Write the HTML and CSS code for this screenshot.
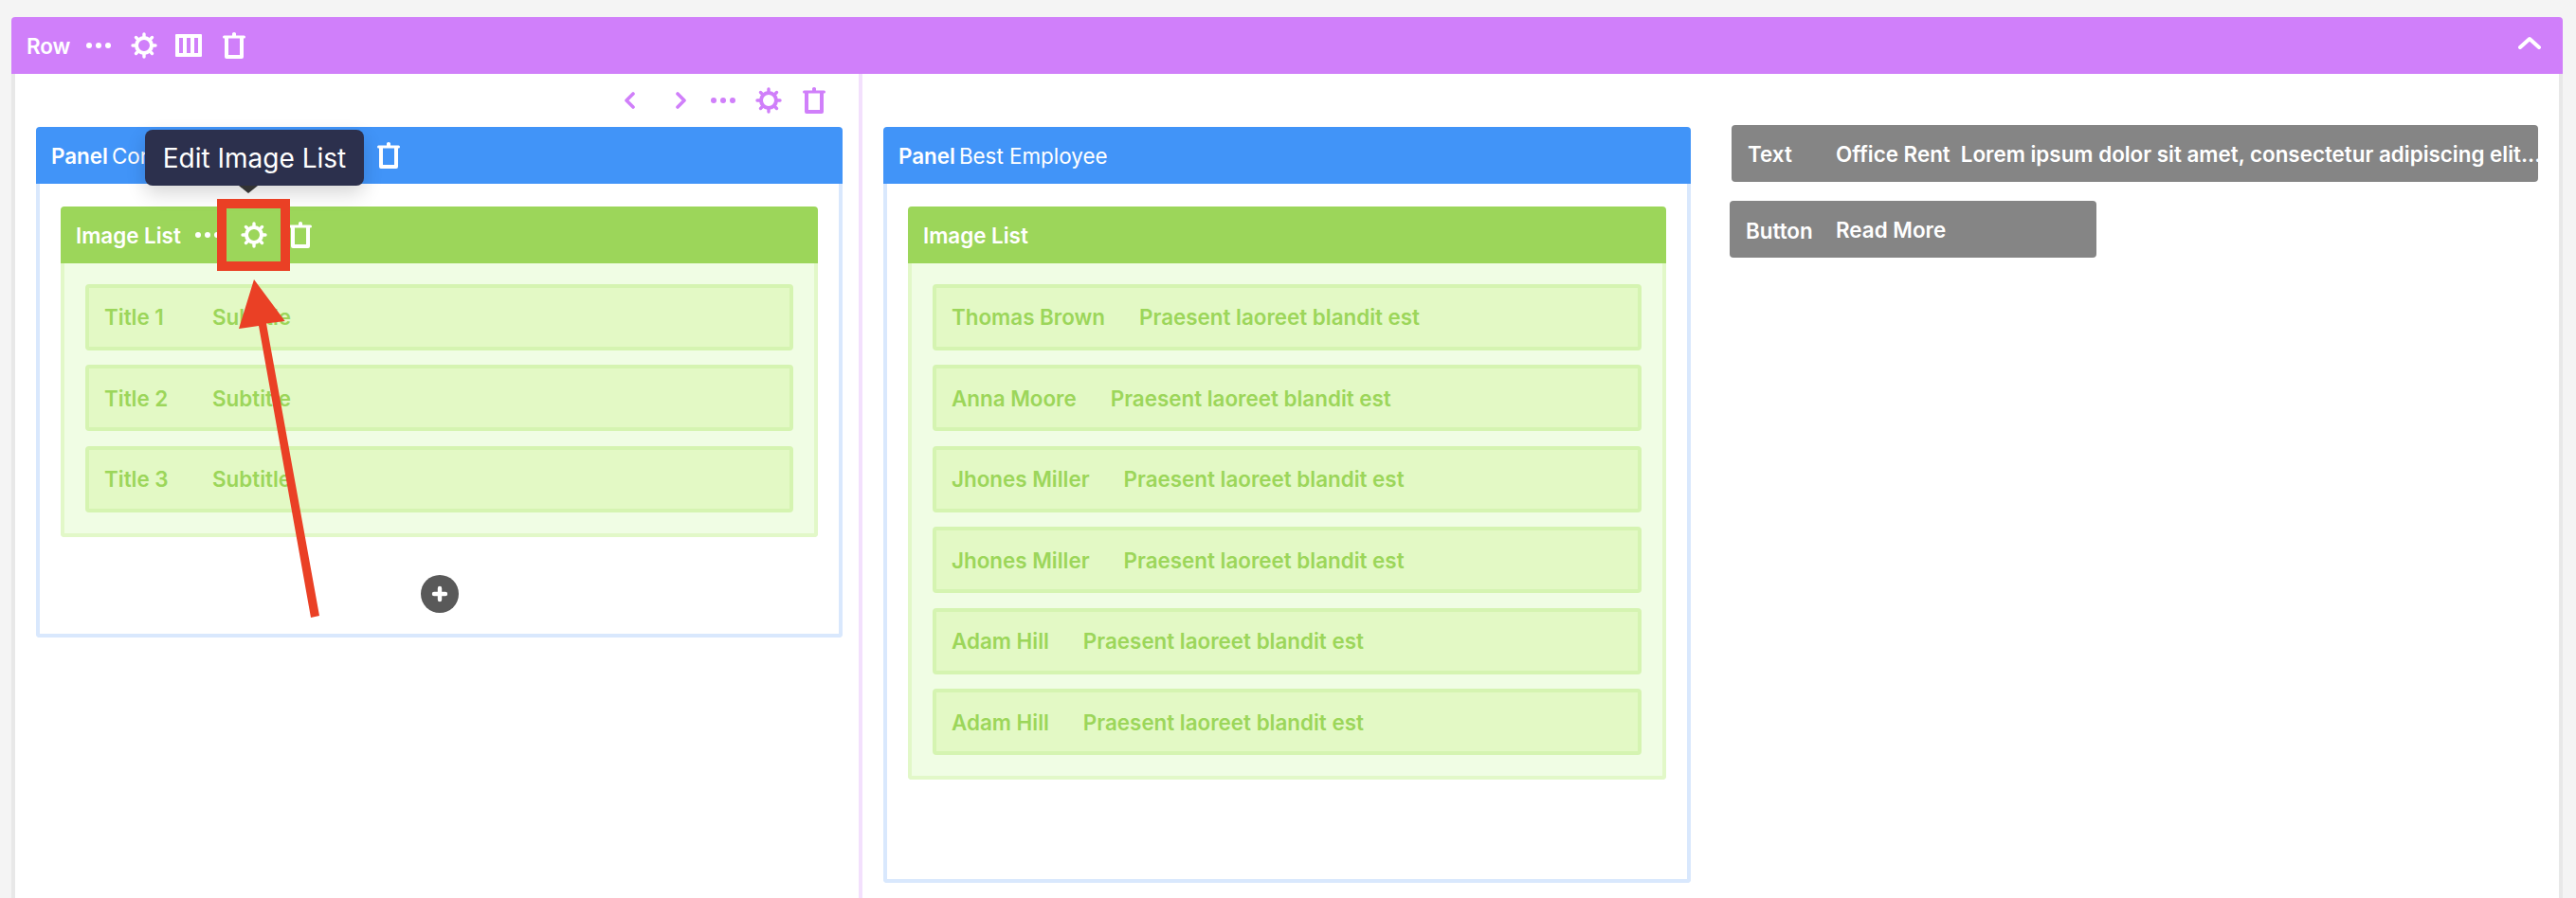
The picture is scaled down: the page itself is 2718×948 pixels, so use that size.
FILE: index.html
```html
<!DOCTYPE html>
<html>
<head>
  <title>Page Builder</title>
  <link rel="stylesheet" href="styles.css">
</head>
<body>
  <svg class="icon-defs" width="0" height="0">
    <defs>
      <symbol id="i-dots" viewBox="0 0 26 6">
        <circle cx="3" cy="3" r="3"/><circle cx="13" cy="3" r="3"/><circle cx="23" cy="3" r="3"/>
      </symbol>
      <symbol id="i-gear" viewBox="0 0 28 28">
        <circle cx="14" cy="14" r="8" fill="none" stroke="currentColor" stroke-width="4"/>
        <g stroke="currentColor" stroke-width="3.4" stroke-linecap="round">
          <path d="M14 2v3M14 23v3M2 14h3M23 14h3M5.5 5.5l2.2 2.2M20.3 20.3l2.2 2.2M5.5 22.5l2.2-2.2M20.3 7.700l2.200-2.200"/>
        </g>
      </symbol>
      <symbol id="i-columns" viewBox="0 0 28 24">
        <path fill-rule="evenodd" d="M1 0h26a1 1 0 0 1 1 1v22a1 1 0 0 1-1 1H1a1 1 0 0 1-1-1V1a1 1 0 0 1 1-1zM4 4v16h4V4zM12 4v16h4V4zM20 4v16h4V4z"/>
      </symbol>
      <symbol id="i-trash" viewBox="0 0 24 28">
        <g fill="none" stroke="currentColor" stroke-width="4" stroke-linejoin="round">
          <path d="M4 6v20h16V6"/>
        </g>
        <path d="M1.500 3.500h21a1.500 1.500 0 0 1 0 3h-21a1.500 1.500 0 0 1 0-3zM10 3.500V1.500a2 1.500 0 0 1 4 0v2z"/>
      </symbol>
      <symbol id="i-left" viewBox="0 0 12 18">
        <path d="M10 2L3 9l7 7" fill="none" stroke="currentColor" stroke-width="3.600" stroke-linecap="round" stroke-linejoin="round"/>
      </symbol>
      <symbol id="i-right" viewBox="0 0 12 18">
        <path d="M2 2l7 7-7 7" fill="none" stroke="currentColor" stroke-width="3.600" stroke-linecap="round" stroke-linejoin="round"/>
      </symbol>
      <symbol id="i-up" viewBox="0 0 24 14">
        <path d="M2 12l10-9 10 9" fill="none" stroke="currentColor" stroke-width="4" stroke-linecap="round" stroke-linejoin="round"/>
      </symbol>
    </defs>
  </svg>

  <div class="page">
    <div class="row-block">
      <div class="bar bar-row">
        <span class="bar-title">Row</span>
        <svg class="ico ico-dots"><use href="#i-dots"/></svg>
        <svg class="ico ico-gear"><use href="#i-gear"/></svg>
        <svg class="ico ico-columns"><use href="#i-columns"/></svg>
        <svg class="ico ico-trash"><use href="#i-trash"/></svg>
        <svg class="ico ico-up"><use href="#i-up"/></svg>
      </div>

      <div class="row-body">
        <div class="col col-left">
          <div class="col-tools">
            <svg class="ico ico-chev"><use href="#i-left"/></svg>
            <svg class="ico ico-chev next"><use href="#i-right"/></svg>
            <svg class="ico ico-dots"><use href="#i-dots"/></svg>
            <svg class="ico ico-gear"><use href="#i-gear"/></svg>
            <svg class="ico ico-trash"><use href="#i-trash"/></svg>
          </div>

          <div class="panel">
            <div class="bar bar-panel">
              <span class="bar-title">Panel</span>
              <span class="panel-name">Content</span>
              <svg class="ico ico-trash panel-trash"><use href="#i-trash"/></svg>
            </div>
            <div class="panel-body">
              <div class="image-list">
                <div class="bar bar-list">
                  <span class="bar-title">Image List</span>
                  <svg class="ico ico-dots"><use href="#i-dots"/></svg>
                  <svg class="ico ico-gear"><use href="#i-gear"/></svg>
                  <svg class="ico ico-trash"><use href="#i-trash"/></svg>
                </div>
                <div class="list-body">
                  <div class="list-item"><span class="item-title">Title 1</span><span>Subtitle</span></div>
                  <div class="list-item"><span class="item-title">Title 2</span><span>Subtitle</span></div>
                  <div class="list-item"><span class="item-title">Title 3</span><span>Subtitle</span></div>
                </div>
              </div>
              <div class="add-wrap">
                <div class="add-btn">
                  <svg width="18" height="18" viewBox="0 0 18 18"><path d="M9 3v12M3 9h12" stroke="#fff" stroke-width="4.400" stroke-linecap="round"/></svg>
                </div>
              </div>
            </div>
          </div>
        </div>

        <div class="col col-mid">
          <div class="panel">
            <div class="bar bar-panel">
              <span class="bar-title">Panel</span>
              <span class="panel-name">Best Employee</span>
            </div>
            <div class="panel-body tall">
              <div class="image-list">
                <div class="bar bar-list">
                  <span class="bar-title">Image List</span>
                </div>
                <div class="list-body">
                  <div class="list-item"><span class="item-title">Thomas Brown</span><span>Praesent laoreet blandit est</span></div>
                  <div class="list-item"><span class="item-title">Anna Moore</span><span>Praesent laoreet blandit est</span></div>
                  <div class="list-item"><span class="item-title">Jhones Miller</span><span>Praesent laoreet blandit est</span></div>
                  <div class="list-item"><span class="item-title">Jhones Miller</span><span>Praesent laoreet blandit est</span></div>
                  <div class="list-item"><span class="item-title">Adam Hill</span><span>Praesent laoreet blandit est</span></div>
                  <div class="list-item"><span class="item-title">Adam Hill</span><span>Praesent laoreet blandit est</span></div>
                </div>
              </div>
            </div>
          </div>
        </div>

        <div class="col col-side">
          <div class="grey-bar grey-text">
            <span class="grey-label">Text</span>
            <span class="grey-head">Office Rent</span>
            <span>Lorem ipsum dolor sit amet, consectetur adipiscing elit...</span>
          </div>
          <div class="grey-bar grey-button">
            <span class="grey-label">Button</span>
            <span>Read More</span>
          </div>
        </div>
      </div>
    </div>
  </div>

  <!-- annotation drawn over the page -->
  <div class="tooltip">Edit Image List</div>
  <div class="red-box"></div>
  <svg class="red-arrow" width="110" height="370" viewBox="240 290 110 370">
    <polygon points="268,295 300.700,339 281,341.500 337,650 328,652 273,344 252,347" fill="#ea4025"/>
  </svg>
</body>
</html>
```

FILE: styles.css
```css
* {
  box-sizing: border-box;
}

html, body {
  margin: 0;
  height: 948px;
  overflow: hidden;
  background: #f4f4f4;
}

body {
  position: relative;
  font-family: Inter, "Noto Sans", sans-serif;
  font-size: 22.4px;
  font-weight: 600;
  color: #fff;
}

.icon-defs {
  position: absolute;
}

.page {
  padding: 18px 14px 0 12px;
}

.ico {
  display: block;
  flex: none;
  fill: currentColor;
  color: inherit;
}

.ico-dots { width: 26px; height: 6px; }
.ico-gear { width: 28px; height: 28px; }
.ico-columns { width: 28px; height: 24px; }
.ico-trash { width: 24px; height: 28px; }
.ico-chev { width: 12px; height: 18px; }
.ico-up { width: 24px; height: 14px; }

.bar {
  display: flex;
  align-items: center;
  height: 60px;
  border-radius: 4px 4px 0 0;
}

.bar-title {
  white-space: nowrap;
}

/* row */
.bar-row {
  background: #d07ffa;
  padding: 0 23px 0 16px;
}

.bar-row .ico-dots { margin-left: 17px; }
.bar-row .ico-gear { margin-left: 21px; }
.bar-row .ico-columns { margin-left: 19px; }
.bar-row .ico-trash { margin-left: 22px; }
.bar-row .ico-up { margin-left: auto; margin-top: -6px; }

.row-body {
  display: flex;
  height: 870px;
  background: #fff;
  border-left: 4px solid #e8e8e8;
  border-right: 4px solid #e8e8e8;
}

.col-left {
  flex: none;
  width: 894px;
  padding: 0 17px 0 22px;
  border-right: 4px solid #f3e0fd;
}

.col-tools {
  display: flex;
  align-items: center;
  justify-content: flex-end;
  height: 56px;
  padding: 0 18px 0 0;
  color: #d07ffa;
}

.col-tools .next { margin-left: 43px; }
.col-tools .ico-dots { margin-left: 25px; }
.col-tools .ico-gear { margin-left: 21px; }
.col-tools .ico-trash { margin-left: 22px; }

.col-mid {
  flex: none;
  width: 874px;
  padding: 56px 0 0 22px;
}

.col-side {
  flex: 1;
  display: flex;
  flex-direction: column;
  align-items: flex-start;
  gap: 20px;
  padding: 54px 0 0 41px;
}

/* panel */
.panel {
  width: 851px;
}

.col-mid .panel {
  width: 852px;
}

.bar-panel {
  background: #4194f8;
  padding-left: 16px;
}

.panel-name {
  margin-left: 4px;
  font-weight: 400;
}

.panel-trash {
  margin-left: 196px;
}

.panel-body {
  padding: 24px 22px 0;
  border: 4px solid #d9e8fd;
  border-top: 0;
  border-radius: 0 0 4px 4px;
  height: 479px;
}

.panel-body.tall {
  height: 738px;
}

/* image list */
.bar-list {
  background: #9cd65a;
  padding-left: 16px;
}

.bar-list .ico-dots { margin-left: 15px; }
.bar-list .ico-gear { margin-left: 22px; }
.bar-list .ico-trash { margin-left: 23px; }

.list-body {
  display: flex;
  flex-direction: column;
  gap: 15.9px;
  padding: 22px;
  background: #f0fde4;
  border: 4px solid #e2f8c8;
  border-top: 0;
  border-radius: 0 0 4px 4px;
}

.list-item {
  display: flex;
  align-items: center;
  height: 69.6px;
  padding-left: 16px;
  background: #e3f9c5;
  border: 4px solid #d5f4b1;
  border-radius: 4px;
  color: #9cd65a;
  white-space: nowrap;
}

.item-title {
  min-width: 114px;
  padding-right: 36px;
}

.add-wrap {
  display: flex;
  justify-content: center;
  margin-top: 40px;
}

.add-btn {
  display: flex;
  align-items: center;
  justify-content: center;
  width: 40px;
  height: 40px;
  border-radius: 50%;
  background: #595959;
}

/* grey blocks on the right */
.grey-bar {
  display: flex;
  align-items: center;
  height: 60px;
  background: #858585;
  border-radius: 4px;
  white-space: nowrap;
}

.grey-text {
  width: 851px;
  margin-left: 2px;
  padding-left: 17px;
}

.grey-button {
  width: 387px;
  padding-left: 17px;
}

.grey-label {
  min-width: 93px;
}

.grey-button .grey-label {
  min-width: 95px;
  margin-top: 2px;
}

.grey-head {
  margin-right: 11px;
}

/* annotation */
.tooltip {
  position: absolute;
  left: 153px;
  top: 137px;
  width: 231px;
  height: 59px;
  display: flex;
  align-items: center;
  justify-content: center;
  background: #2c304d;
  border-radius: 8px;
  font-size: 28px;
  font-weight: 400;
  box-shadow: 0 8px 20px rgba(0, 0, 0, 0.16);
}

.tooltip::after {
  content: "";
  position: absolute;
  left: 99px;
  top: 59px;
  border-left: 10px solid transparent;
  border-right: 10px solid transparent;
  border-top: 8px solid #333;
}

.red-box {
  position: absolute;
  left: 229px;
  top: 210px;
  width: 77px;
  height: 76px;
  border: 10px solid #ea4025;
}

.red-arrow {
  position: absolute;
  left: 240px;
  top: 290px;
}
```
